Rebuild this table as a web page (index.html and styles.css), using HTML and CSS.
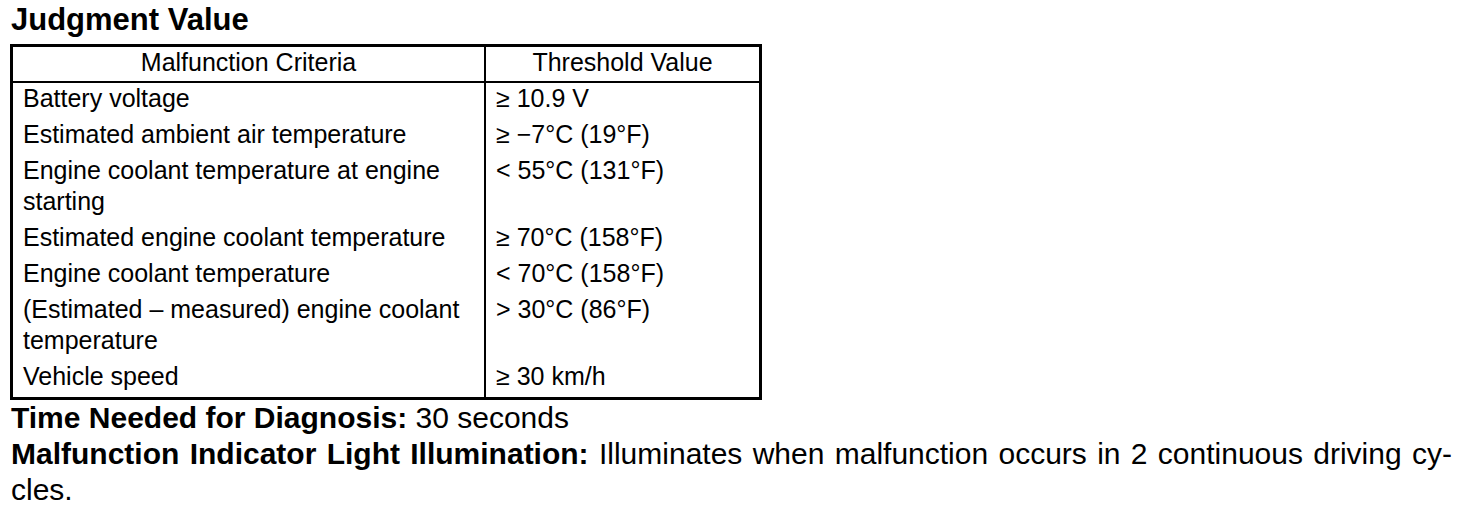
FILE: index.html
```html
<!DOCTYPE html>
<html lang="en">
<head>
    <meta charset="UTF-8">
    <title>Judgment Value</title>
    <link rel="stylesheet" href="styles.css">
</head>
<body>
    <div class="page">
        <h2 class="title">Judgment Value</h2>

        <table class="criteria">
            <thead>
                <tr>
                    <th class="col-criteria">Malfunction Criteria</th>
                    <th class="col-threshold">Threshold Value</th>
                </tr>
            </thead>
            <tbody>
                <tr>
                    <td class="col-criteria">Battery voltage</td>
                    <td class="col-threshold">&ge; 10.9 V</td>
                </tr>
                <tr>
                    <td class="col-criteria">Estimated ambient air temperature</td>
                    <td class="col-threshold">&ge; &minus;7&deg;C (19&deg;F)</td>
                </tr>
                <tr>
                    <td class="col-criteria">Engine coolant temperature at engine starting</td>
                    <td class="col-threshold">&lt; 55&deg;C (131&deg;F)</td>
                </tr>
                <tr>
                    <td class="col-criteria">Estimated engine coolant temperature</td>
                    <td class="col-threshold">&ge; 70&deg;C (158&deg;F)</td>
                </tr>
                <tr>
                    <td class="col-criteria">Engine coolant temperature</td>
                    <td class="col-threshold">&lt; 70&deg;C (158&deg;F)</td>
                </tr>
                <tr>
                    <td class="col-criteria">(Estimated &ndash; measured) engine coolant temperature</td>
                    <td class="col-threshold">&gt; 30&deg;C (86&deg;F)</td>
                </tr>
                <tr>
                    <td class="col-criteria">Vehicle speed</td>
                    <td class="col-threshold">&ge; 30 km/h</td>
                </tr>
            </tbody>
        </table>

        <p class="note"><b>Time Needed for Diagnosis:</b> 30 seconds</p>
        <p class="note"><b>Malfunction Indicator Light Illumination:</b> Illuminates when malfunction occurs in 2 continuous driving cy&shy;cles.</p>
    </div>
</body>
</html>
```

FILE: styles.css
```css
body {
    margin: 0;
    background: #fff;
    color: #000;
    font-family: "Liberation Sans", Arial, Helvetica, sans-serif;
}

.page {
    padding: 4px 20px 0 11px;
}

.title {
    margin: 0 0 8px;
    font-size: 31px;
    line-height: 32px;
    font-weight: bold;
}

.criteria {
    margin-left: -1px;
    width: 752px;
    border: 3px solid #000;
    border-spacing: 0;
    font-size: 25px;
    line-height: 31px;
}

.criteria th {
    font-weight: normal;
    text-align: center;
    padding: 0 10px 3px;
    border-bottom: 2px solid #000;
}

.criteria td {
    text-align: left;
    vertical-align: top;
    padding: 0 10px 5px;
}

.col-criteria {
    width: 451px;
    border-right: 2px solid #000;
}

.note {
    margin: 0;
    font-size: 30px;
    line-height: 36px;
    text-align: justify;
}
```
